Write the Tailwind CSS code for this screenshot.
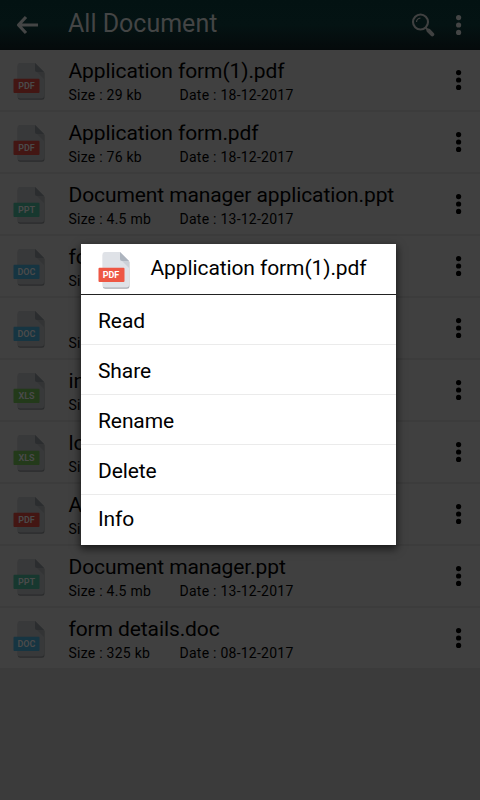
<!DOCTYPE html>
<html lang="en">
<head>
<meta charset="utf-8">
<title>All Document</title>
<script src="https://cdn.jsdelivr.net/npm/@tailwindcss/browser@4"></script>
</head>
<body class="bg-[#3b3b3b] w-[480px] h-[800px] overflow-hidden relative text-black font-['Roboto',sans-serif]">
<svg class="hidden">
  <symbol id="page" viewBox="0 0 34 38">
    <path d="M7 1.500h15l9 9v24.500q0 2.500-2.500 2.500H7q-2.500 0-2.500-2.500V4q0-2.500 2.500-2.500z" transform="translate(.4 .3)" fill="var(--edge)"/>
    <path d="M7 1h15l9 9v24q0 2.500-2.500 2.500H7q-2.500 0-2.500-2.500V3.500Q4.500 1 7 1z" fill="var(--paper)"/>
    <path d="M24 10h7v7z" fill="var(--shade)"/>
    <path d="M22 1l9 9h-7q-2 0-2-2z" fill="var(--fold)"/>
    <rect x="0.500" y="16.700" width="26" height="14.300" rx="1" fill="var(--tag)"/>
  </symbol>
  <symbol id="dots" viewBox="0 0 6 22">
    <circle cx="2.600" cy="3.600" r="2.600"/><circle cx="2.600" cy="11" r="2.600"/><circle cx="2.600" cy="18.400" r="2.600"/>
  </symbol>
</svg>

<header class="h-[50px] flex items-center bg-linear-to-b from-[#031212] via-[#041313] to-[#050a0b] text-[#444545]">
  <svg class="w-[22px] h-[20px] ml-4" viewBox="0 0 22 20" fill="none" stroke="#444545" stroke-width="3.200" stroke-linejoin="round"><path d="M10 2 2.500 10l7.500 8M2.500 10H22"/></svg>
  <h1 class="ml-[30px] -mt-[3px] w-[343px] text-[25px] leading-[30px] whitespace-nowrap">All Document</h1>
  <svg class="w-[24px] h-[24px]" viewBox="0 0 24 24" fill="none" stroke="#404141">
    <circle cx="9.500" cy="9" r="7.500" stroke-width="2.100"/><path d="M5.500 9q.2-3.500 4-4" stroke-width="1.200"/><path d="m14.700 14.700 2.500 2.500" stroke-width="2"/><path d="m17.500 17.500 3.800 3.800" stroke-width="4" stroke-linecap="round"/>
  </svg>
  <svg class="w-[6px] h-[22px] ml-[21px] fill-[#444545]"><use href="#dots"/></svg>
</header>

<main id="list"></main>

<section class="absolute left-[81px] top-[244px] w-[315px] h-[301px] bg-white shadow-[0_3px_8px_1px_rgba(0,0,0,0.6)] text-[21px] leading-[26px] tracking-[-0.1px]">
  <div class="h-[51px] flex border-b border-[#222] whitespace-nowrap">
    <div class="relative w-[34px] h-[38px] ml-[16.500px] mt-[7px] [--paper:#dfe2e7] [--edge:#a9acb2] [--fold:#adb4be] [--shade:#cbd0d7] [--tag:#ee5744]">
      <svg class="w-[34px] h-[38px]"><use href="#page"/></svg>
      <span class="absolute left-[0.500px] top-[18px] w-[26px] text-center text-[9px] leading-[12px] tracking-normal font-bold text-white">PDF</span>
    </div>
    <h2 class="ml-[19px] mt-[11px]">Application form(1).pdf</h2>
  </div>
  <ul>
    <li class="h-[50px] pl-[17px] pt-[13px] border-b border-[#ebebeb]">Read</li>
    <li class="h-[50px] pl-[17px] pt-[13px] border-b border-[#ebebeb]">Share</li>
    <li class="h-[50px] pl-[17px] pt-[13px] border-b border-[#ebebeb]">Rename</li>
    <li class="h-[50px] pl-[17px] pt-[13px] border-b border-[#ebebeb]">Delete</li>
    <li class="h-[50px] pl-[17px] pt-[11px]">Info</li>
  </ul>
</section>

<script>
const tags = {
  PDF: '[--tag:#431613]',
  PPT: '[--tag:#17382f]',
  DOC: '[--tag:#163542]',
  XLS: '[--tag:#233a1a]'
};
const files = [
  ['PDF', 'Application form(1).pdf', 'Size : 29 kb', 'Date : 18-12-2017'],
  ['PDF', 'Application form.pdf', 'Size : 76 kb', 'Date : 18-12-2017'],
  ['PPT', 'Document manager application.ppt', 'Size : 4.5 mb', 'Date : 13-12-2017'],
  ['DOC', 'fo', 'Si', ''],
  ['DOC', '', 'Si', ''],
  ['XLS', 'in', 'Si', ''],
  ['XLS', 'lo', 'Si', ''],
  ['PDF', 'A', 'Si', ''],
  ['PPT', 'Document manager.ppt', 'Size : 4.5 mb', 'Date : 13-12-2017'],
  ['DOC', 'form details.doc', 'Size : 325 kb', 'Date : 08-12-2017']
];
document.getElementById('list').innerHTML = files.map(([type, name, size, date]) => `
<article class="box-content h-[60px] flex bg-[#404040] border-b-2 border-[#3c3c3c] last:border-b-0 whitespace-nowrap">
  <div class="relative w-[34px] h-[38px] ml-[13px] mt-[12px] [--paper:#38393a] [--edge:#2a2b2c] [--fold:#2b2d2f] [--shade:#333435] ${tags[type]}">
    <svg class="w-[34px] h-[38px]"><use href="#page"/></svg>
    <span class="absolute left-[0.500px] top-[18px] w-[26px] text-center text-[9px] leading-[12px] font-bold text-[#4a4a4a]">${type}</span>
  </div>
  <div class="ml-[21.500px] w-[387px] pt-[8px]">
    <h3 class="h-[26px] text-[21px] leading-[26px] tracking-[-0.1px]">${name}</h3>
    <p class="flex text-[14px] leading-[20px] mt-px tracking-[0.25px]"><span class="w-[111px]">${size}</span><span>${date}</span></p>
  </div>
  <svg class="w-[6px] h-[22px] mt-[19px] shrink-0"><use href="#dots"/></svg>
</article>`).join('');
</script>
</body>
</html>
